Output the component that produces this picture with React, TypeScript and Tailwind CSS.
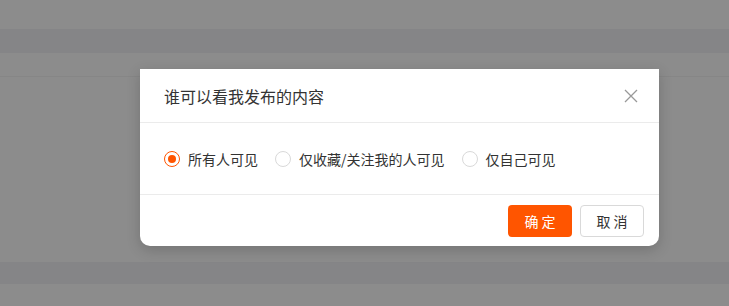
import { useState } from "react";

const OPTIONS = ["所有人可见", "仅收藏/关注我的人可见", "仅自己可见"];

function Radio({ checked }: { checked: boolean }) {
  return (
    <span
      className={
        checked
          ? "w-4 h-4 rounded-full border border-[#ff5500] flex items-center justify-center bg-white"
          : "w-4 h-4 rounded-full border border-[#d9d9d9] bg-white"
      }
    >
      {checked && <span className="w-2 h-2 rounded-full bg-[#ff5500]" />}
    </span>
  );
}

export default function App() {
  const [value, setValue] = useState(0);

  return (
    <div
      className="relative w-[729px] h-[306px] overflow-hidden bg-[#8c8c8c]"
      style={{ fontFamily: '"Noto Sans CJK SC", "Liberation Sans", sans-serif' }}
    >
      {/* ── Dimmed page behind the modal ── */}
      <div className="flex flex-col">
        <div className="h-[29px]" />
        <div className="h-[24px] bg-[#858587]" />
        <div className="h-[24px] border-b border-[#868686]" />
        <div className="h-[185px]" />
        <div className="h-[22px] bg-[#858587]" />
      </div>

      {/* ── Modal ── */}
      <div className="absolute left-[140px] top-[69px] w-[519px] bg-white rounded-b-[10px] shadow-[0_4px_14px_rgba(0,0,0,0.18)]">
        <div className="h-[54px] flex items-center justify-between pl-6 pr-[21px] border-b border-[#ebebeb]">
          <h2 className="text-base text-[#333] leading-none">谁可以看我发布的内容</h2>
          <svg width="14" height="14" viewBox="0 0 14 14" className="text-[#999]">
            <path d="M1 1L13 13M13 1L1 13" stroke="currentColor" strokeWidth="1.3" />
          </svg>
        </div>

        <div className="h-[72px] flex items-center pl-6 gap-[17px] border-b border-[#ebebeb]">
          {OPTIONS.map((label, i) => (
            <label
              key={label}
              className="flex items-center gap-2 cursor-pointer"
              onClick={() => setValue(i)}
            >
              <Radio checked={value === i} />
              <span className="text-sm text-[#333] leading-none">{label}</span>
            </label>
          ))}
        </div>

        <div className="h-[51px] flex items-start justify-end gap-2 pt-[10px] pr-[15px]">
          <button className="w-16 h-8 rounded-sm bg-[#ff5500] text-white text-sm tracking-[0.2em] pl-[0.2em]">
            确定
          </button>
          <button className="w-16 h-8 rounded-sm border border-[#d9d9d9] bg-white text-[#333] text-sm tracking-[0.2em] pl-[0.2em]">
            取消
          </button>
        </div>
      </div>
    </div>
  );
}
